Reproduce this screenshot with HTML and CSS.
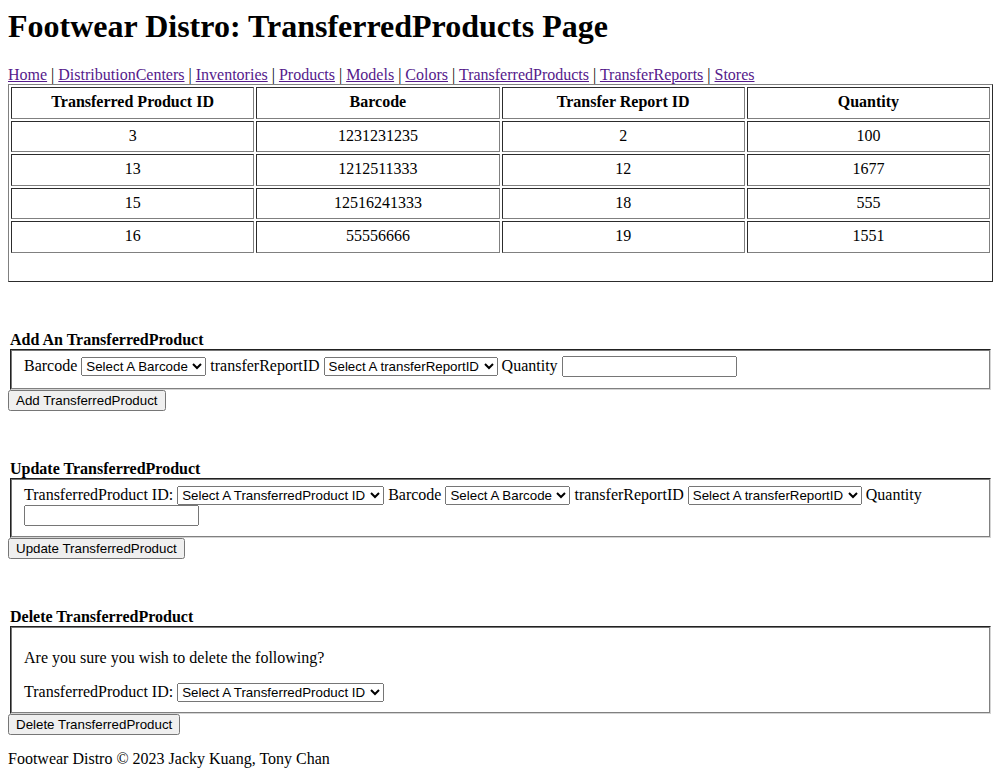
FILE: index.html
```html
<!DOCTYPE html>
<html>
<head>
<meta charset="utf-8">
<title>Footwear Distro: TransferredProducts</title>
<link rel="stylesheet" href="styles.css">
</head>
<body>
<h1 class="title">Footwear Distro: TransferredProducts Page</h1>
<nav class="nav">
<a href="#">Home</a> | <a href="#">DistributionCenters</a> | <a href="#">Inventories</a> | <a href="#">Products</a> | <a href="#">Models</a> | <a href="#">Colors</a> | <a href="#">TransferredProducts</a> | <a href="#">TransferReports</a> | <a href="#">Stores</a>
</nav>
<table class="data" border="1">
<thead>
<tr><th>Transferred Product ID</th><th>Barcode</th><th>Transfer Report ID</th><th>Quantity</th></tr>
</thead>
<tbody>
<tr><td>3</td><td>1231231235</td><td>2</td><td>100</td></tr>
<tr><td>13</td><td>1212511333</td><td>12</td><td>1677</td></tr>
<tr><td>15</td><td>12516241333</td><td>18</td><td>555</td></tr>
<tr><td>16</td><td>55556666</td><td>19</td><td>1551</td></tr>
<tr class="spacer"><td colspan="4" class="blank"></td></tr>
</tbody>
</table>

<form class="section">
<legend class="heading"><strong>Add An TransferredProduct</strong></legend>
<fieldset class="fields fields-add">
<label>Barcode</label> <select class="sel sel-barcode"><option>Select A Barcode</option></select>
<label>transferReportID</label> <select class="sel sel-report"><option>Select A transferReportID</option></select>
<label>Quantity</label> <input class="qty" type="text">
</fieldset>
<button type="button" class="btn">Add TransferredProduct</button>
</form>

<form class="section">
<legend class="heading"><strong>Update TransferredProduct</strong></legend>
<fieldset class="fields">
<label>TransferredProduct ID:</label> <select class="sel sel-tp"><option>Select A TransferredProduct ID</option></select>
<label>Barcode</label> <select class="sel sel-barcode"><option>Select A Barcode</option></select>
<label>transferReportID</label> <select class="sel sel-report"><option>Select A transferReportID</option></select>
<label>Quantity</label> <input class="qty" type="text">
</fieldset>
<button type="button" class="btn">Update TransferredProduct</button>
</form>

<form class="section">
<legend class="heading"><strong>Delete TransferredProduct</strong></legend>
<fieldset class="fields">
<p class="confirm">Are you sure you wish to delete the following?</p>
<label>TransferredProduct ID:</label> <select class="sel sel-tp"><option>Select A TransferredProduct ID</option></select>
</fieldset>
<button type="button" class="btn">Delete TransferredProduct</button>
</form>

<footer class="footer">
<p>Footwear Distro © 2023 Jacky Kuang, Tony Chan</p>
</footer>
</body>
</html>
```

FILE: styles.css
```css
html, body {
  font-family: "Liberation Serif", "Times New Roman", serif;
  font-size: 16px;
  color: #000;
  background: #fff;
}
body {
  margin: 8px;
}
.title {
  font-size: 32px;
  margin: 0 0 21px 0;
  line-height: 37px;
}
.nav {
  line-height: 18px;
}
.nav a {
  color: #551a8b;
}
.data {
  width: 100%;
  table-layout: fixed;
  border-collapse: separate;
  border-spacing: 2px;
  border: 1px outset grey;
  font-family: "Liberation Serif", "Times New Roman", serif;
}
.data th, .data td {
  width: 25%;
  border: 1px inset grey;
  padding: 5px 6px 7px;
  line-height: 17.5px;
  text-align: center;
}
.data .blank {
  border: none;
  padding: 0;
  height: 24px;
}
.section {
  margin-top: 49px;
}
.section + .section {
  margin-top: 49px;
}
.heading {
  padding: 0 2px;
  font-size: 16px;
}
.fields {
  margin: 0 2px;
  border: 2px groove #e0e0e0;
  border-color: #767676 #d4d4d4 #d4d4d4 #767676;
  padding: 5.6px 12px 10px;
}
.fields-add {
  padding-bottom: 11px;
}
.sel, .qty, .btn {
  font-family: "Liberation Sans", Arial, sans-serif;
  font-size: 13.333px;
}
.btn {
  height: 21px;
  padding: 1px 6px;
}
.qty {
  width: 175px;
  height: 21px;
  box-sizing: border-box;
}
.confirm {
  margin: 16px 0;
}
.footer p {
  margin: 15px 0 0;
}
```
